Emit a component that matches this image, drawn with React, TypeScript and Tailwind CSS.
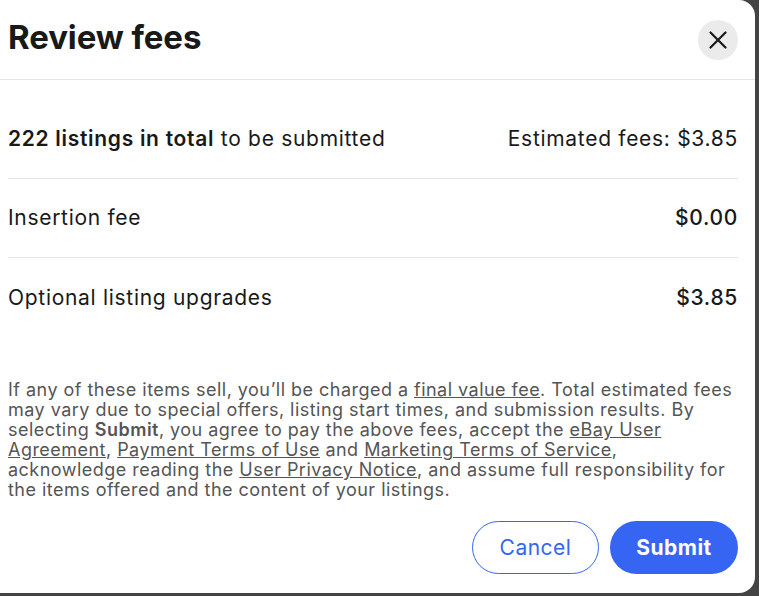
type FeeRowProps = {
	label: React.ReactNode;
	value: React.ReactNode;
	divider?: boolean;
};

function FeeRow({ label, value, divider = true }: FeeRowProps) {
	return (
		<div className={`flex h-[79px] items-center justify-between ${divider ? "border-b border-[#e5e5e5]" : ""}`}>
			<p>{label}</p>
			<p>{value}</p>
		</div>
	);
}

export default function App() {
	return (
		<div className="h-[596px] w-[759px] bg-[#444] font-['Inter',sans-serif] text-[#191919]">
			<div className="flex h-[593px] w-[755px] flex-col rounded-r-2xl bg-white">
				<header className="flex h-[80px] items-center justify-between border-b border-[#e5e5e5] pl-2 pr-[17px]">
					<h1 className="pb-[4px] text-[33px] font-bold tracking-[-0.1px]">Review fees</h1>
					<button className="flex h-10 w-10 items-center justify-center rounded-full bg-[#ebebeb]">
						<svg width="18" height="18" viewBox="0 0 18 18" fill="none" stroke="#191919" strokeWidth="2.2" strokeLinecap="round">
							<path d="M1.5 1.5l15 15M16.5 1.5l-15 15" />
						</svg>
					</button>
				</header>

				<section className="mx-2 mr-[17px] mt-[20px] text-[21px] tracking-[0.7px]">
					<FeeRow
						label={
							<>
								<span className="font-semibold">222 listings in total</span> to be submitted
							</>
						}
						value="Estimated fees: $3.85"
					/>
					<FeeRow label="Insertion fee" value={<span className="font-medium">$0.00</span>} />
					<FeeRow
						label="Optional listing upgrades"
						value={<span className="font-medium">$3.85</span>}
						divider={false}
					/>
				</section>

				<p className="mx-2 mr-[17px] mt-[43px] whitespace-nowrap text-[18px] leading-[20px] tracking-[0.47px] text-[#555]">
					If any of these items sell, you’ll be charged a <a className="underline">final value fee</a>. Total
					estimated fees
					<br />
					may vary due to special offers, listing start times, and submission results. By
					<br />
					selecting <span className="font-semibold">Submit</span>, you agree to pay the above fees, accept the{" "}
					<a className="underline">eBay User</a>
					<br />
					<a className="underline">Agreement</a>, <a className="underline">Payment Terms of Use</a> and{" "}
					<a className="underline">Marketing Terms of Service</a>,
					<br />
					acknowledge reading the <a className="underline">User Privacy Notice</a>, and assume full responsibility
					for
					<br />
					the items offered and the content of your listings.
				</p>

				<div className="mr-[17px] mt-[21px] flex justify-end gap-[11px] text-[21px] tracking-[0.5px]">
					<button className="h-[53px] w-[127px] rounded-full border border-[#3665f3] text-[#3665f3]">
						Cancel
					</button>
					<button className="h-[53px] w-[128px] rounded-full bg-[#3665f3] font-bold text-white">Submit</button>
				</div>
			</div>
		</div>
	);
}
